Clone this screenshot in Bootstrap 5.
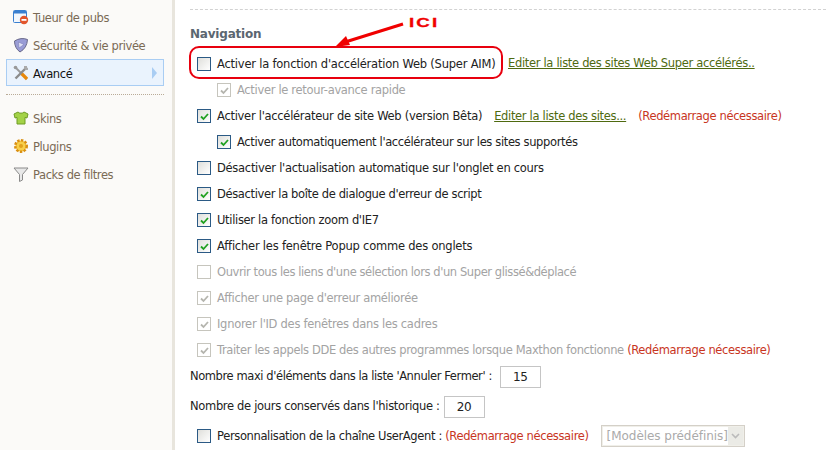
<!DOCTYPE html>
<html lang="fr"><head><meta charset="utf-8"><title>Options</title>
<link href="https://cdn.jsdelivr.net/npm/bootstrap@5.3.0/dist/css/bootstrap.min.css" rel="stylesheet">
<style>
html,body{height:450px;overflow:hidden}
body{font-family:"DejaVu Sans","Liberation Sans",sans-serif;font-size:11.5px;letter-spacing:-.32px;color:#222;background:#fff;position:relative}
.side{width:175px;height:450px;flex:none;background:#fbfaf8;border-right:3px solid #e8e5dd;padding:3px 8px 0 6px}
.sitem{height:28px;padding-left:7px;gap:4px;color:#7a6a55;font-size:11.5px;letter-spacing:-.4px}
.sitem span{padding-top:4px}
.sitem svg{flex:none}
.sact{height:27px;border:1px solid #a9cdf3;background:#eaf3fd;color:#111;padding-left:6px}
.sarrow{margin-left:auto;margin-right:6px;width:0;height:0;border-left:5px solid #a9cdf3;border-top:6px solid transparent;border-bottom:6px solid transparent}
.sdiv{border-top:1px dotted #b9ab97;margin:8px 0 9px}
.mainp{flex:1;padding:9px 0 0 15px}
.dash{border-top:1px dashed #d2d2d2}
.head{font-weight:700;color:#5b6670;font-size:12px;height:23px;margin-top:13px;letter-spacing:-.2px;line-height:23px}
.rw{height:26px;gap:6px;white-space:nowrap}
.rw>span{padding-top:2px}
.in1{padding-left:7px}
.in2{padding-left:27px}
.cb{width:14px;height:14px;flex:none;border:1px solid #2b5a85;background:linear-gradient(135deg,#dfdfdb,#fff);position:relative}
.cb svg{position:absolute;left:1px;top:1px}
.dis .cb{border-color:#c6c5bd;background:#fff}
.dis{color:#a3a3a3}
.lnk{color:#4f6a10;text-decoration:underline;margin-left:5px;padding-top:2px}
.lnk2{color:#4f6a10;text-decoration:underline;margin-left:6px;padding-top:2px}
.red{color:#c8351e}
.redm{margin-left:6px}
.box{height:33px;width:314px;border:2px solid #e8000e;border-radius:10px;padding:2px 0 0 6px;margin-left:-1px;gap:6px;white-space:nowrap}
.box span{padding-top:2px}
.boxwrap{height:33px;margin-bottom:-2px}
.num{width:41px;height:22px;border:1px solid #c5c5c5;text-align:center;line-height:20px;font-size:12px;margin:1px 0 0 2px}
.numb{margin-left:-2px}
.sel{width:144px;height:22px;border:1px solid #d4d0c8;color:#aaa;margin-left:6px;padding:0 0 0 5px;line-height:20px;position:relative;font-size:12px;letter-spacing:-.05px;outline:1px solid #f0efe9;outline-offset:-2px}
.selb{position:absolute;right:1px;top:1px;bottom:1px;width:15px;background:#ebebe6;display:flex;align-items:center;justify-content:center}
.t1{letter-spacing:-.22px}.t2{letter-spacing:-.28px}.t4{letter-spacing:-.36px}.t5{letter-spacing:-.41px}
.ici{position:absolute;left:409px;top:15px;color:#f00000;font:700 12.500px/16px "Liberation Sans",sans-serif;letter-spacing:1.400px;transform:scaleX(1.5);transform-origin:left;-webkit-text-stroke:.3px #f00000}
.arr{position:absolute;left:330px;top:18px}
</style></head><body>
<div class="d-flex">
<aside class="side">
<div class="sitem d-flex align-items-center"><svg width="16" height="16" viewBox="0 0 16 16"><rect x=".5" y="1.500" width="13" height="12" rx="1" fill="#f2f7fd" stroke="#3a7fd0"/><rect x="1" y="2" width="12" height="2.500" fill="#3a7fd0"/><circle cx="11" cy="11" r="4.200" fill="#e2552b"/><rect x="8.500" y="10" width="5" height="1.800" fill="#fff"/></svg><span>Tueur de pubs</span></div>
<div class="sitem d-flex align-items-center"><svg width="16" height="16" viewBox="0 0 16 16"><path d="M1.500 4Q8 0 14.500 2.500 14 11 7 15 1.500 11 1.500 4z" fill="#9a9dd6" stroke="#6a6a8a"/><path d="M5.500 5l5.500 2.500L6 11z" fill="#dfe1f5" stroke="#7d80b8" stroke-width=".6"/></svg><span>Sécurité &amp; vie privée</span></div>
<div class="sitem sact d-flex align-items-center"><svg width="16" height="16" viewBox="0 0 16 16"><path d="M3 3l11 11" stroke="#9a9a9a" stroke-width="1.800"/><path d="M8.500 8.500 14 14" stroke="#e8890c" stroke-width="3.200"/><path d="M12.500 3.500 2.500 13.500" stroke="#8c8c8c" stroke-width="2.400"/><circle cx="2.500" cy="2.500" r="1.800" fill="#999"/><path d="M11 1h3v1.500L15 3v2h-2.500L11 3.500z" fill="#aaa"/></svg><span>Avancé</span><i class="sarrow"></i></div>
<div class="sdiv"></div>
<div class="sitem d-flex align-items-center"><svg width="16" height="16" viewBox="0 0 16 16"><path d="M5 2 1 4l1 4 2-.6V14h8V7.400l2 .6 1-4-4-2c-1 1.600-5 1.600-6 0z" fill="#a3d247" stroke="#6f9d25"/></svg><span>Skins</span></div>
<div class="sitem d-flex align-items-center"><svg width="16" height="16" viewBox="0 0 16 16"><circle cx="8" cy="8" r="5.500" fill="#f5c030" stroke="#d98f12" stroke-width="3" stroke-dasharray="2.300 1.300"/><circle cx="8" cy="8" r="4.500" fill="#f7cf4a"/><circle cx="8" cy="8" r="2" fill="#e2a11c"/></svg><span>Plugins</span></div>
<div class="sitem d-flex align-items-center"><svg width="16" height="16" viewBox="0 0 16 16"><path d="M1 2h14L9.500 8.500V14l-3 1.500v-7z" fill="#e8e8e8" stroke="#8a8a8a"/></svg><span>Packs de filtres</span></div>
</aside>
<main class="mainp">
<div class="dash"></div>
<div class="head">Navigation</div>
<div class="boxwrap d-flex align-items-center"><div class="box d-flex align-items-center"><i class="cb"></i><span class="t1">Activer la fonction d'accélération Web (Super AIM)</span></div><a class="lnk">Editer la liste des sites Web Super accélérés..</a></div>
<div class="rw in2 dis d-flex align-items-center"><i class="cb"><svg width="11" height="11" viewBox="0 0 11 11"><path d="M2 5.500 4.500 8 9 3" fill="none" stroke="#b5b5ae" stroke-width="1.800"/></svg></i><span>Activer le retour-avance rapide</span></div>
<div class="rw in1 d-flex align-items-center"><i class="cb"><svg width="11" height="11" viewBox="0 0 11 11"><path d="M2 5.500 4.500 8 9 3" fill="none" stroke="#21a121" stroke-width="1.800"/></svg></i><span class="t2">Activer l'accélérateur de site Web (version Bêta)</span><a class="lnk2">Editer la liste des sites...</a><span class="red redm t4">(Redémarrage nécessaire)</span></div>
<div class="rw in2 d-flex align-items-center"><i class="cb"><svg width="11" height="11" viewBox="0 0 11 11"><path d="M2 5.500 4.500 8 9 3" fill="none" stroke="#21a121" stroke-width="1.800"/></svg></i><span class="t4">Activer automatiquement l'accélérateur sur les sites supportés</span></div>
<div class="rw in1 d-flex align-items-center"><i class="cb"></i><span class="t2">Désactiver l'actualisation automatique sur l'onglet en cours</span></div>
<div class="rw in1 d-flex align-items-center"><i class="cb"><svg width="11" height="11" viewBox="0 0 11 11"><path d="M2 5.500 4.500 8 9 3" fill="none" stroke="#21a121" stroke-width="1.800"/></svg></i><span class="t4">Désactiver la boîte de dialogue d'erreur de script</span></div>
<div class="rw in1 d-flex align-items-center"><i class="cb"><svg width="11" height="11" viewBox="0 0 11 11"><path d="M2 5.500 4.500 8 9 3" fill="none" stroke="#21a121" stroke-width="1.800"/></svg></i><span>Utiliser la fonction zoom d'IE7</span></div>
<div class="rw in1 d-flex align-items-center"><i class="cb"><svg width="11" height="11" viewBox="0 0 11 11"><path d="M2 5.500 4.500 8 9 3" fill="none" stroke="#21a121" stroke-width="1.800"/></svg></i><span class="t1">Afficher les fenêtre Popup comme des onglets</span></div>
<div class="rw in1 dis d-flex align-items-center"><i class="cb"></i><span class="t5">Ouvrir tous les liens d'une sélection lors d'un Super glissé&amp;déplacé</span></div>
<div class="rw in1 dis d-flex align-items-center"><i class="cb"><svg width="11" height="11" viewBox="0 0 11 11"><path d="M2 5.500 4.500 8 9 3" fill="none" stroke="#b5b5ae" stroke-width="1.800"/></svg></i><span>Afficher une page d'erreur améliorée</span></div>
<div class="rw in1 dis d-flex align-items-center"><i class="cb"><svg width="11" height="11" viewBox="0 0 11 11"><path d="M2 5.500 4.500 8 9 3" fill="none" stroke="#b5b5ae" stroke-width="1.800"/></svg></i><span class="t2">Ignorer l'ID des fenêtres dans les cadres</span></div>
<div class="rw in1 dis d-flex align-items-center"><i class="cb"><svg width="11" height="11" viewBox="0 0 11 11"><path d="M2 5.500 4.500 8 9 3" fill="none" stroke="#b5b5ae" stroke-width="1.800"/></svg></i><span class="t4">Traiter les appels DDE des autres programmes lorsque Maxthon fonctionne <span class="red">(Redémarrage nécessaire)</span></span></div>
<div class="rw d-flex align-items-center"><span class="t5">Nombre maxi d'éléments dans la liste 'Annuler Fermer' :</span><div class="num">15</div></div>
<div class="rw d-flex align-items-center mt-1"><span>Nombre de jours conservés dans l'historique :</span><div class="num numb">20</div></div>
<div class="rw in1 d-flex align-items-center mt-1"><i class="cb"></i><span class="t4">Personnalisation de la chaîne UserAgent : <span class="red">(Redémarrage nécessaire)</span></span><div class="sel">[Modèles prédéfinis]<i class="selb"><svg width="9" height="6" viewBox="0 0 9 6"><path d="M1 1l3.500 3.500L8 1" fill="none" stroke="#bbb" stroke-width="1.600"/></svg></i></div></div>
</main>
</div>
<svg class="arr" width="76" height="32" viewBox="0 0 76 32"><path d="M73 6 12 25" stroke="#f00000" stroke-width="3"/><path d="M5 29 16 18l4 9z" fill="#f00000"/></svg>
<div class="ici">ICI</div>
</body></html>
